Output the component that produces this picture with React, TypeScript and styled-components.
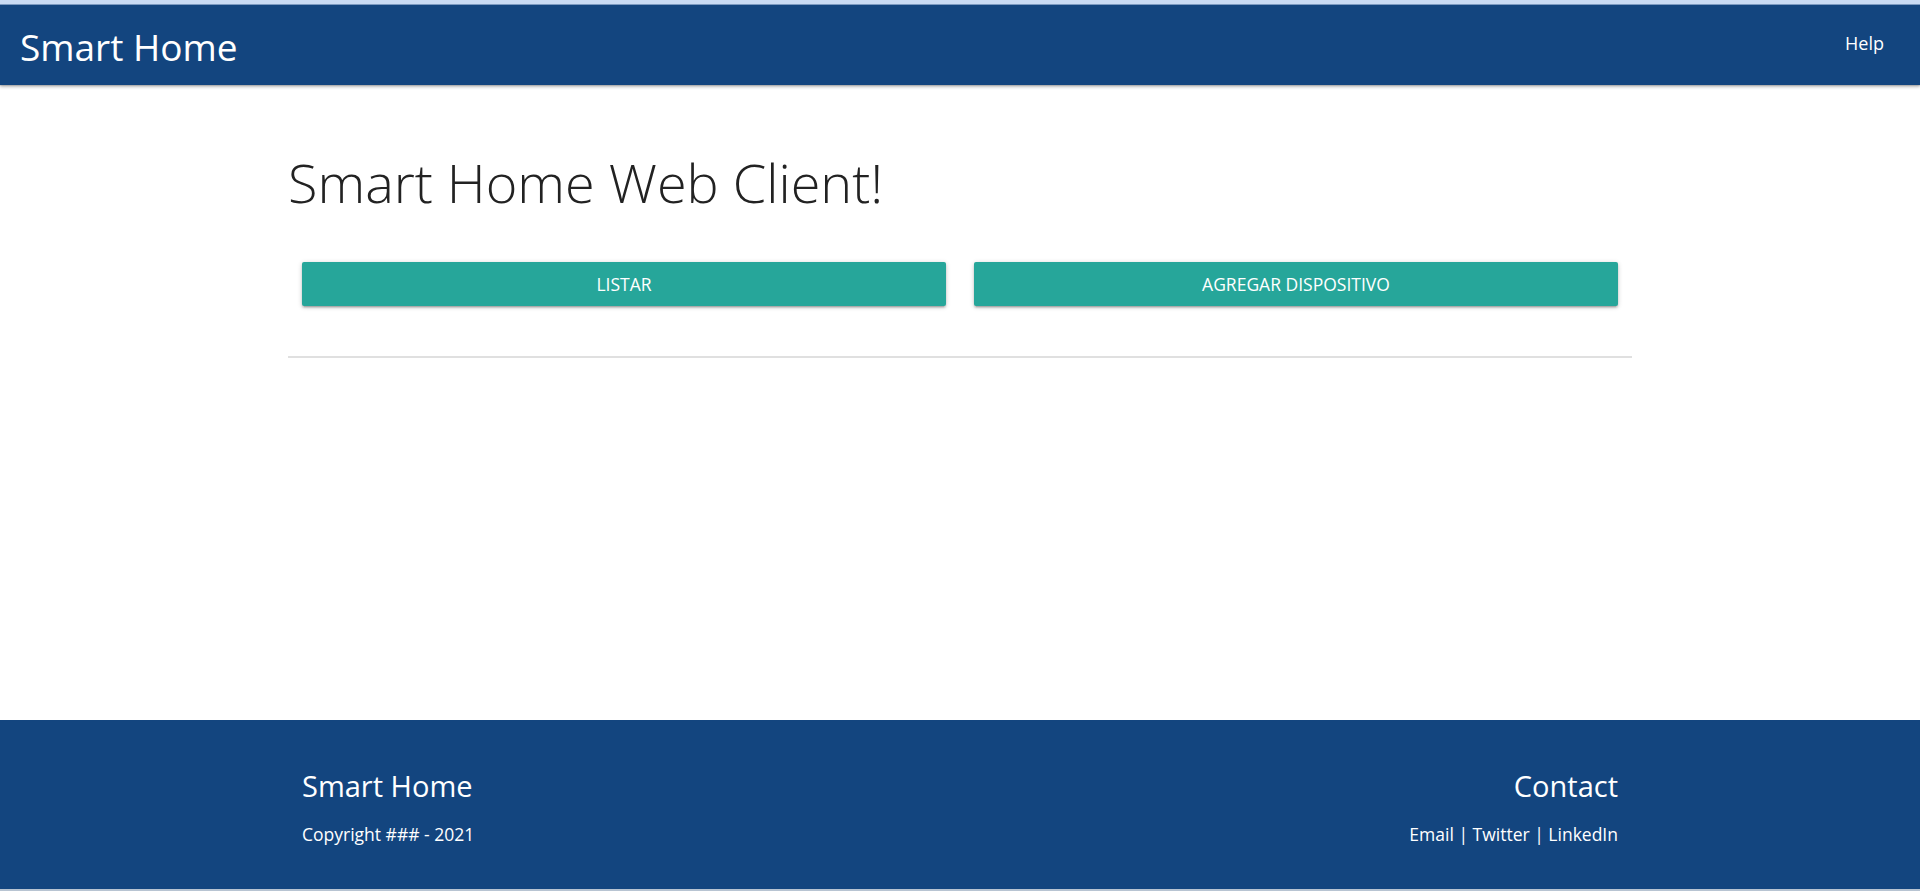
import styled, { createGlobalStyle } from 'styled-components';

const GlobalStyle = createGlobalStyle`
  html, body {
    margin: 0;
    padding: 0;
    background: #fff;
    font-family: 'Open Sans', 'Noto Sans', sans-serif;
  }
  * {
    box-sizing: border-box;
  }
`;

export default function App() {
  return (
    <Page>
      <GlobalStyle />
      <TopStrip />
      <NavBar>
        <BrandLogo>Smart Home</BrandLogo>
        <NavLinks>
          <NavLink>Help</NavLink>
        </NavLinks>
      </NavBar>
      <Main>
        <Container>
          <PageTitle>Smart Home Web Client!</PageTitle>
          <ButtonRow>
            <Col>
              <ActionButton>Listar</ActionButton>
            </Col>
            <Col>
              <ActionButton>Agregar dispositivo</ActionButton>
            </Col>
          </ButtonRow>
          <Divider />
        </Container>
      </Main>
      <Footer>
        <FooterRow>
          <Col>
            <FooterHeading>Smart Home</FooterHeading>
            <FooterText>Copyright ### - 2021</FooterText>
          </Col>
          <Col $align='right'>
            <FooterHeading>Contact</FooterHeading>
            <FooterText>
              <FooterLink>Email</FooterLink> | <FooterLink>Twitter</FooterLink> |{' '}
              <FooterLink>LinkedIn</FooterLink>
            </FooterText>
          </Col>
        </FooterRow>
      </Footer>
    </Page>
  );
}

const Page = styled.div`
  display: flex;
  flex-direction: column;
  min-height: 891px;
`;

const TopStrip = styled.div`
  height: 5px;
  background: #c9dbf4;
  border-bottom: 1px solid #7e9cc4;
`;

const NavBar = styled.nav`
  height: 80px;
  background: #13457f;
  color: #fff;
  display: flex;
  align-items: center;
  justify-content: space-between;
  padding: 0 20px 0 20px;
  box-shadow: 0 2px 3px rgba(0, 0, 0, 0.25), 0 1px 1px rgba(0, 0, 0, 0.12);
  position: relative;
  z-index: 1;
`;

const BrandLogo = styled.a`
  font-size: 37px;
  color: #fff;
  text-decoration: none;
  margin-top: 2px;
`;

const NavLinks = styled.ul`
  list-style: none;
  margin: 0;
  padding: 0;
  display: flex;
`;

const NavLink = styled.li`
  font-size: 18px;
  padding: 0 16px;
  margin-top: -4px;
`;

const Main = styled.main`
  flex: 1;
`;

const Container = styled.div`
  width: 70%;
  margin: 0 auto;
`;

const PageTitle = styled.h3`
  font-size: 54px;
  font-weight: 300;
  color: #222;
  margin: 0;
  padding-top: 68px;
  line-height: 1.1;
`;

const ButtonRow = styled.div`
  display: flex;
  margin-top: 50px;
`;

const Col = styled.div<{ $align?: 'left' | 'right' }>`
  flex: 1;
  padding: 0 14px;
  text-align: ${({ $align }) => $align ?? 'left'};
`;

const ActionButton = styled.button`
  width: 100%;
  height: 44px;
  border: none;
  border-radius: 2px;
  background: #26a69a;
  color: #fff;
  font-family: inherit;
  font-size: 17.5px;
  text-transform: uppercase;
  box-shadow: 0 2px 2px 0 rgba(0, 0, 0, 0.14), 0 3px 1px -2px rgba(0, 0, 0, 0.12),
    0 1px 5px 0 rgba(0, 0, 0, 0.2);
  cursor: pointer;
`;

const Divider = styled.div`
  height: 2px;
  background: #e0e0e0;
  margin-top: 50px;
`;

const Footer = styled.footer`
  background: #13457f;
  color: #fff;
  height: 171px;
  border-bottom: 2px solid #b8c4d2;
`;

const FooterRow = styled.div`
  width: 70%;
  margin: 0 auto;
  display: flex;
  padding-top: 50px;
`;

const FooterHeading = styled.h5`
  font-size: 29px;
  font-weight: 400;
  margin: 0 0 20px;
  line-height: 1.1;
`;

const FooterText = styled.p`
  font-size: 17.5px;
  margin: 0;
`;

const FooterLink = styled.span`
  color: #fff;
`;
